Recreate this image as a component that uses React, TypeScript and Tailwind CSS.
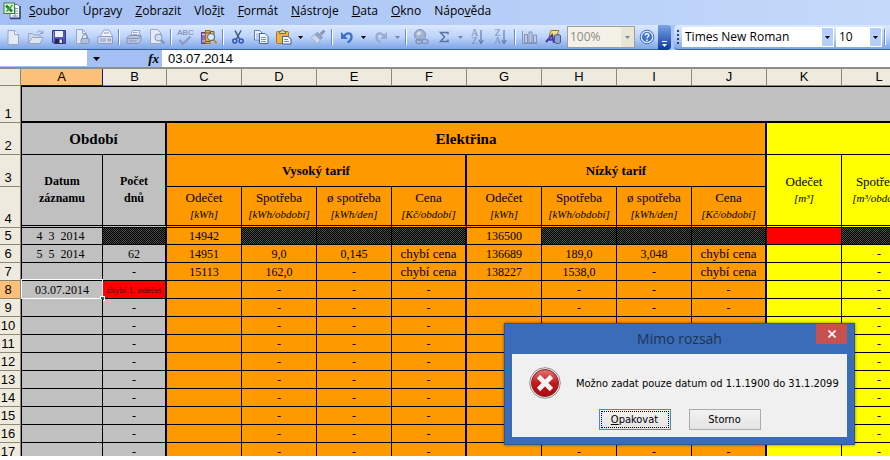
import type { ReactNode } from 'react'

interface MenuEntry {
  before: string
  key: string
  after: string
}

interface SheetRow {
  n: number
  date: string
  days: string
  high: string[]
  low: string[]
  gas: string[]
}

const menu: MenuEntry[] = [
  { before: '', key: 'S', after: 'oubor' },
  { before: 'Úpr', key: 'a', after: 'vy' },
  { before: '', key: 'Z', after: 'obrazit' },
  { before: 'Vlož', key: 'i', after: 't' },
  { before: '', key: 'F', after: 'ormát' },
  { before: '', key: 'N', after: 'ástroje' },
  { before: '', key: 'D', after: 'ata' },
  { before: '', key: 'O', after: 'kno' },
  { before: 'Nápo', key: 'v', after: 'ěda' },
]

const columns = ['A', 'B', 'C', 'D', 'E', 'F', 'G', 'H', 'I', 'J', 'K', 'L']

const emptyTariff = ['', '-', '-', '-']

const rows: SheetRow[] = [
  { n: 6, date: '5  5  2014 ', days: '62', high: ['14951', '9,0', '0,145', 'chybí cena'], low: ['136689', '189,0', '3,048', 'chybí cena'], gas: ['', '-'] },
  { n: 7, date: '', days: '-', high: ['15113', '162,0', '-', 'chybí cena'], low: ['138227', '1538,0', '-', 'chybí cena'], gas: ['', '-'] },
  { n: 8, date: '03.07.2014', days: 'chybí 1. odečet', high: emptyTariff, low: emptyTariff, gas: ['', '-'] },
  ...[9, 10, 11, 12, 13, 14, 15, 16, 17].map((n) => ({
    n,
    date: '',
    days: '-',
    high: emptyTariff,
    low: emptyTariff,
    gas: ['', '-'],
  })),
]

const hatch = 'bg-[repeating-conic-gradient(#000_0_25%,#484848_0_50%)] bg-[length:2px_2px]'

function Icon({ children }: { children: ReactNode }) {
  return (
    <svg viewBox="0 0 16 16" className="h-4 w-4" fill="none" aria-hidden="true">
      {children}
    </svg>
  )
}

function ExcelIcon() {
  return (
    <svg viewBox="0 0 18 18" className="h-[18px] w-[18px]" fill="none" aria-hidden="true">
      <path d="M7 2.500h7.500l2.500 2.500v11H7z" fill="#fff" stroke="#5a6fa8" />
      <path d="M9 6.500h6M9 9h6M9 11.500h6M9 14h6M12 5v10" stroke="#7c93c8" />
      <path d="M17 4v12.500H7" stroke="#31436f" strokeWidth="1.400" />
      <rect x="1" y="1" width="10.500" height="10.500" fill="#e3f2de" stroke="#3d7f3a" />
      <path d="M3 3.500 9 9.500" stroke="#1f8a2b" strokeWidth="2.600" />
      <path d="M9.500 3 3.500 9.500" stroke="#3aa545" strokeWidth="1.600" />
    </svg>
  )
}

function NewIcon() {
  return (
    <Icon>
      <path d="M3 1.500h6.500l4 4v10H3z" fill="#e3e9f5" stroke="#98a5c4" />
      <path d="M9.500 1.500v4h4" fill="#f6f9ff" stroke="#98a5c4" />
    </Icon>
  )
}

function OpenIcon() {
  return (
    <Icon>
      <path d="M.5 14.500v-10h4l1.500 1.500h6v3" fill="#ccd6ea" stroke="#98a5c4" />
      <path d="M.5 14.500 4 8.500h11l-3 6z" fill="#dde5f4" stroke="#98a5c4" />
      <path d="M9 3.500c1.500-2 4-2 5 .5M14.800 1.500v3h-3" stroke="#8d9bc0" />
    </Icon>
  )
}

function SaveIcon() {
  return (
    <Icon>
      <path d="M1.500 1.500h13v13H3l-1.500-1.500z" fill="#5356b8" stroke="#34378c" />
      <rect x="4" y="2" width="8" height="6" fill="#eef1fb" />
      <rect x="4" y="10" width="8" height="4.500" fill="#24265f" />
      <rect x="8.500" y="10.500" width="2.500" height="3.500" fill="#e4e8f8" />
      <path d="M2.500 2.500v10" stroke="#8d90e0" />
    </Icon>
  )
}

function PermissionIcon() {
  return (
    <Icon>
      <path d="M2.500.5h6l4 4v10h-10z" fill="#e3e9f5" stroke="#98a5c4" />
      <path d="M8.500.5v4h4" stroke="#98a5c4" />
      <path d="M8.500 9.500V8a2.500 2.500 0 0 1 5 0v1.500" stroke="#8694b8" />
      <rect x="7" y="9.500" width="8" height="5" rx="1" fill="#b3c0da" stroke="#8694b8" />
    </Icon>
  )
}

function MailIcon() {
  return (
    <Icon>
      <path d="M3.500 7 7 1h5l3.500 6" fill="#f0f4fc" stroke="#98a5c4" />
      <path d="M1 7.500h14.500v7H1z" fill="#d5ddee" stroke="#8c9abd" />
      <path d="M3 10h6M3 12h6M11 10h2.500v2H11zM7 4h5" stroke="#8c9abd" />
    </Icon>
  )
}

function PrintIcon() {
  return (
    <Icon>
      <path d="M4.500 7 6.500 1.500H14L12.500 7" fill="#f0f4fc" stroke="#98a5c4" />
      <path d="M7 3.500h4.500M6.500 5.500h4.500" stroke="#98a5c4" />
      <path d="M1 8.500 3.500 6.500H15v5l-2.500 3H1z" fill="#b9c5de" stroke="#8592b6" />
      <path d="M1 9.500h11.500L15 7M3 12h7.500" stroke="#8592b6" />
    </Icon>
  )
}

function PreviewIcon() {
  return (
    <Icon>
      <path d="M1.500.5h7l3.500 3.500v10.500H1.500z" fill="#e3e9f5" stroke="#98a5c4" />
      <circle cx="9.500" cy="8.500" r="3.500" fill="#d0e0f6" stroke="#8592b6" />
      <path d="m12 11 3.500 3.500" stroke="#8592b6" strokeWidth="2" />
    </Icon>
  )
}

// the letters above the spelling tick are real text inside the button
function SpellIcon() {
  return (
    <span className="flex flex-col items-center">
      <span className="font-['Liberation_Sans'] text-[8px] leading-[7px] text-[#6f80ac]">ABC</span>
      <svg viewBox="0 0 14 9" className="h-[9px] w-[14px]" fill="none" aria-hidden="true">
        <path d="m1.500 4 3.500 4 7.500-7.500" stroke="#8b9bc3" strokeWidth="2.200" />
      </svg>
    </span>
  )
}

function ResearchIcon() {
  return (
    <Icon>
      <rect x=".5" y="3.500" width="4" height="11" fill="#8c6bc9" stroke="#59409a" />
      <path d="M1 5.500h3M1 12h3" stroke="#d9c9f4" />
      <rect x="4.500" y="1.500" width="4.500" height="13" fill="#e8b53c" stroke="#9b6f1c" />
      <path d="M5 4h4M5 12.500h4" stroke="#7d5514" />
      <path d="M9.500 2.500h3.500v9H9.500z" fill="#e2c27a" stroke="#7a5a34" />
      <circle cx="10" cy="8" r="3.500" fill="#d5eefb" stroke="#50658e" />
      <path d="m12.500 10.500 3 4" stroke="#c48a20" strokeWidth="2" />
    </Icon>
  )
}

function CutIcon() {
  return (
    <Icon>
      <path d="M5 1.500 9.500 10M11 1.500 6.500 10" stroke="#44557e" strokeWidth="1.500" />
      <circle cx="4.800" cy="12" r="2" stroke="#2c56b4" strokeWidth="1.500" />
      <circle cx="11.200" cy="12" r="2" stroke="#2c56b4" strokeWidth="1.500" />
    </Icon>
  )
}

function CopyIcon() {
  return (
    <Icon>
      <path d="M1.500 1.500h5l3 3v6.500h-8z" fill="#f4f8ff" stroke="#5d7dbf" />
      <path d="M3 5h4M3 7h4M3 9h3" stroke="#86a2d8" />
      <path d="M6.500 4.500h5.500l3 3v7H6.500z" fill="#f4f8ff" stroke="#4264ad" />
      <path d="M8 8.500h5M8 10.500h5M8 12.500h5" stroke="#6d8ed0" />
    </Icon>
  )
}

function PasteIcon() {
  return (
    <Icon>
      <rect x=".5" y="2.500" width="12" height="12" rx="1" fill="#eab34a" stroke="#a9742a" />
      <path d="M3.500 4.500v-2H5a1.500 1.500 0 0 1 3 0h1.500v2z" fill="#d9d3bd" stroke="#7c6a44" />
      <path d="M6.500 7.500h5.500l3 2.500v5H6.500z" fill="#f4f8ff" stroke="#4c5f8e" />
      <path d="M8 10.500h4M8 12.500h5" stroke="#6d86bd" />
    </Icon>
  )
}

function BrushIcon() {
  return (
    <Icon>
      <path d="m14.500 1.500-4 4" stroke="#8795b8" strokeWidth="3" />
      <path d="m7.500 3.500 5 5-2.500 2-5-5z" fill="#98a7c8" stroke="#8795b8" />
      <path d="m4.500 5.500 6 5.500L7.500 15 1 8.500z" fill="#cfd8ea" stroke="#9eacc9" />
    </Icon>
  )
}

function UndoIcon({ disabled = false }: { disabled?: boolean }) {
  return (
    <svg viewBox="0 0 16 16" className={disabled ? 'h-4 w-4 -scale-x-100' : 'h-4 w-4'} fill="none" aria-hidden="true">
      <path d="M5 7.500C7 3.500 12.500 3 12.500 8c0 3-2 4.500-4 5.500" stroke={disabled ? '#9aabd0' : '#3f6fd0'} strokeWidth="2.400" />
      <path d="M2 3v7h7z" fill={disabled ? '#9aabd0' : '#3f6fd0'} />
    </svg>
  )
}

function LinkIcon() {
  return (
    <Icon>
      <circle cx="7" cy="6" r="5.500" fill="#a4b3d2" stroke="#8091b8" />
      <path d="M4 4c1-2 3-2 4-1S7 6 5 6.500 4 5 4 4" fill="#d2dcee" />
      <rect x="3" y="10.500" width="6" height="4" rx="2" stroke="#8595ba" strokeWidth="1.500" />
      <rect x="9" y="10.500" width="6" height="4" rx="2" stroke="#8595ba" strokeWidth="1.500" />
    </Icon>
  )
}

function SumIcon() {
  return (
    <Icon>
      <path d="M12 5.500V3.500H4.500L8.500 8l-4 4.500H12v-2" stroke="#5b70a4" strokeWidth="1.500" />
    </Icon>
  )
}

function SortIcon({ top, bottom }: { top: string; bottom: string }) {
  return (
    <span className="flex items-center">
      <span className="flex flex-col font-['Liberation_Serif'] text-[10px] leading-[8px] text-[#7f8fb8]">
        <span>{top}</span>
        <span>{bottom}</span>
      </span>
      <svg viewBox="0 0 6 16" className="h-4 w-[6px]" fill="none" aria-hidden="true">
        <path d="M3 1v13M.8 11 3 14.500 5.200 11" stroke="#647cb4" strokeWidth="1.200" />
      </svg>
    </span>
  )
}

function ChartIcon() {
  return (
    <Icon>
      <path d="M.5 2v12.500h15" stroke="#8393b8" />
      <path d="M2.500 5.500h3v8h-3zM7 3h3v10.500H7zM11.500 6h3v7.500h-3z" fill="#c0cbe2" stroke="#8393b8" />
    </Icon>
  )
}

function DrawingIcon() {
  return (
    <Icon>
      <path d="M6 1.500h8l-2.500 5.500H4z" fill="#f3dd80" stroke="#9a7b26" />
      <path d="M9.500 7a3 1.500 0 0 1 6 0v5a3 2 0 0 1-6 1z" fill="#8fa4cd" stroke="#45598c" />
      <path d="M1 13 7 6l2 8M3.500 10.800h5" stroke="#4e3ca6" strokeWidth="2" />
    </Icon>
  )
}

function HelpIcon() {
  return (
    <Icon>
      <circle cx="8" cy="8" r="6.800" fill="#dbe9fd" stroke="#3f6cc0" />
      <circle cx="8" cy="8" r="5" fill="#3d70d0" />
      <path d="M6.200 6.500c0-2.500 3.800-2.300 3.600 0C9.700 7.800 8 7.800 8 9.300M8 10.500v1.500" stroke="#fff" strokeWidth="1.500" />
    </Icon>
  )
}

function ErrorIcon() {
  return (
    <svg viewBox="0 0 32 32" className="h-8 w-8" fill="none" aria-hidden="true">
      <defs>
        <linearGradient id="errorFill" x1="0" y1="0" x2="0" y2="1">
          <stop offset="0" stopColor="#e0777a" />
          <stop offset=".5" stopColor="#c6191f" />
          <stop offset="1" stopColor="#a90a10" />
        </linearGradient>
      </defs>
      <circle cx="16" cy="16" r="15.300" fill="#f4f4f4" stroke="#8d8d8d" />
      <circle cx="16" cy="16" r="13.500" fill="url(#errorFill)" stroke="#8e2023" />
      <path d="m9.500 9.500 13 13M22.500 9.500l-13 13" stroke="#f4f4f4" strokeWidth="4.600" />
    </svg>
  )
}

function Arrow({ disabled = false }: { disabled?: boolean }) {
  return (
    <svg viewBox="0 0 5 3" className="h-[3px] w-[5px]" aria-hidden="true">
      <path d="M0 0h5L2.500 3z" fill={disabled ? '#7787aa' : '#000'} />
    </svg>
  )
}

function ToolButton({ label, children }: { label: string; children: ReactNode }) {
  return (
    <button type="button" aria-label={label} className="flex h-6 w-[23px] shrink-0 items-center justify-center">
      {children}
    </button>
  )
}

function DropButton({ label, disabled = false }: { label: string; disabled?: boolean }) {
  return (
    <button type="button" aria-label={label} className="flex h-6 w-[11px] shrink-0 items-center justify-center">
      <Arrow disabled={disabled} />
    </button>
  )
}

function Separator() {
  return (
    <span className="flex h-4 w-[6px] shrink-0 justify-center">
      <span className="w-px bg-[#6a8ccb]" />
      <span className="w-px bg-white" />
    </span>
  )
}

function Toolbar() {
  return (
    <div className="flex h-[25px] shrink-0 bg-[#a9c4f5]">
      <div className="flex shrink-0 items-center border-b border-[#3b619c] bg-linear-to-b from-[#dbe9fe] via-[#bcd3fa] to-[#7fa5e6] pl-px">
        <ToolButton label="Nový"><NewIcon /></ToolButton>
        <ToolButton label="Otevřít"><OpenIcon /></ToolButton>
        <ToolButton label="Uložit"><SaveIcon /></ToolButton>
        <ToolButton label="Oprávnění"><PermissionIcon /></ToolButton>
        <ToolButton label="E-mail"><MailIcon /></ToolButton>
        <Separator />
        <ToolButton label="Tisk"><PrintIcon /></ToolButton>
        <ToolButton label="Náhled"><PreviewIcon /></ToolButton>
        <Separator />
        <ToolButton label="Pravopis"><SpellIcon /></ToolButton>
        <ToolButton label="Zdroje informací"><ResearchIcon /></ToolButton>
        <Separator />
        <ToolButton label="Vyjmout"><CutIcon /></ToolButton>
        <ToolButton label="Kopírovat"><CopyIcon /></ToolButton>
        <ToolButton label="Vložit"><PasteIcon /></ToolButton>
        <DropButton label="Možnosti vložení" />
        <ToolButton label="Kopírovat formát"><BrushIcon /></ToolButton>
        <Separator />
        <ToolButton label="Zpět"><UndoIcon /></ToolButton>
        <DropButton label="Historie zpět" />
        <ToolButton label="Znovu"><UndoIcon disabled /></ToolButton>
        <DropButton label="Historie znovu" disabled />
        <Separator />
        <ToolButton label="Hypertextový odkaz"><LinkIcon /></ToolButton>
        <ToolButton label="Automatický součet"><SumIcon /></ToolButton>
        <DropButton label="Další funkce" disabled />
        <ToolButton label="Seřadit vzestupně"><SortIcon top="A" bottom="Z" /></ToolButton>
        <ToolButton label="Seřadit sestupně"><SortIcon top="Z" bottom="A" /></ToolButton>
        <Separator />
        <ToolButton label="Průvodce grafem"><ChartIcon /></ToolButton>
        <ToolButton label="Kreslení"><DrawingIcon /></ToolButton>
        <div className="ml-[3px] flex h-[22px] w-[68px] items-center border border-[#a09f95] bg-[#f3f1e8]">
          <select aria-label="Lupa" disabled className="h-full min-w-0 flex-1 appearance-none pl-[2px] text-[12px] text-[#8c8c84] opacity-100">
            <option>100%</option>
          </select>
          <span className="flex h-full w-[13px] items-center justify-center bg-[#e9e6d5]"><Arrow disabled /></span>
        </div>
        <ToolButton label="Nápověda"><HelpIcon /></ToolButton>
      </div>
      <button type="button" aria-label="Možnosti panelu" className="flex w-[13px] shrink-0 flex-col items-center justify-end gap-[2px] rounded-r-sm bg-linear-to-b from-[#7ba2e7] to-[#0a3a9a] pb-[3px]">
        <span className="h-px w-[5px] bg-white" />
        <svg viewBox="0 0 5 3" className="h-[3px] w-[5px]" aria-hidden="true">
          <path d="M0 0h5L2.500 3z" fill="#fff" />
        </svg>
      </button>
      <div className="ml-[3px] flex min-w-0 flex-1 items-center overflow-hidden rounded-l-sm border-b border-[#3b619c] bg-linear-to-b from-[#dbe9fe] via-[#bcd3fa] to-[#7fa5e6] pl-[3px]">
        <span className="mr-[3px] flex w-[2px] shrink-0 flex-col gap-[2px]">
          <span className="h-[2px] bg-[#27417f]" />
          <span className="h-[2px] bg-[#27417f]" />
          <span className="h-[2px] bg-[#27417f]" />
          <span className="h-[2px] bg-[#27417f]" />
        </span>
        <div className="flex h-5 w-[152px] shrink-0 items-center bg-white pr-px">
          <select aria-label="Písmo" className="h-full min-w-0 flex-1 appearance-none pl-[3px] text-[12px] text-black">
            <option>Times New Roman</option>
          </select>
          <span className="flex h-[18px] w-[11px] items-center justify-center bg-[#b7cff8]"><Arrow /></span>
        </div>
        <div className="ml-[2px] flex h-5 w-[46px] shrink-0 items-center bg-white pr-px">
          <select aria-label="Velikost písma" className="h-full min-w-0 flex-1 appearance-none pl-[3px] text-[12px] text-black">
            <option>10</option>
          </select>
          <span className="flex h-[18px] w-[11px] items-center justify-center bg-[#b7cff8]"><Arrow /></span>
        </div>
        <Separator />
      </div>
    </div>
  )
}

function FormulaBar() {
  return (
    <div className="flex h-[19px] shrink-0 items-stretch border-b-2 border-[#8e8e88] bg-[#a3bff3]">
      <input aria-label="Pole názvů" className="h-4 w-[87px] shrink-0 bg-white" />
      <button type="button" aria-label="Seznam názvů" className="flex w-[19px] shrink-0 items-center justify-center">
        <svg viewBox="0 0 7 4" className="h-1 w-[7px]" aria-hidden="true">
          <path d="M0 0h7L3.500 4z" fill="#000" />
        </svg>
      </button>
      <button
        type="button"
        aria-label="Vložit funkci"
        className="w-14 shrink-0 pr-[3px] text-right font-['Liberation_Serif'] text-[13px] leading-[16px] font-bold italic"
      >
        fx
      </button>
      <input
        aria-label="Řádek vzorců"
        defaultValue="03.07.2014"
        className="min-w-0 flex-1 bg-white pl-[6px] font-['Liberation_Sans'] text-[13px] leading-[16px] text-black"
      />
    </div>
  )
}

function RowNumber({ n, selected = false }: { n: number; selected?: boolean }) {
  return (
    <th
      scope="row"
      className={`border-r border-b border-[#8b8975] pr-1 text-center align-bottom font-['Liberation_Sans'] text-[13px] leading-[16px] font-normal ${selected ? 'bg-[#fdc078]' : 'bg-[#eeebde]'}`}
    >
      {n}
    </th>
  )
}

function UnitHead({ title, unit, last = false, rowSpan = 1, color }: { title: string; unit: string; last?: boolean; rowSpan?: number; color: string }) {
  return (
    <th
      rowSpan={rowSpan}
      className={`border-b-[3px] border-black text-[13px] leading-[16px] font-normal [border-bottom-style:double] ${last ? 'border-r-2' : 'border-r'} ${color}`}
    >
      <div>{title}</div>
      <div className="text-[11px] italic">{unit}</div>
    </th>
  )
}

function TariffHeads() {
  return (
    <>
      <UnitHead title="Odečet" unit="[kWh]" color="bg-[#ff9900]" />
      <UnitHead title="Spotřeba" unit="[kWh/období]" color="bg-[#ff9900]" />
      <UnitHead title="ø spotřeba" unit="[kWh/den]" color="bg-[#ff9900]" />
      <UnitHead title="Cena" unit="[Kč/období]" last color="bg-[#ff9900]" />
    </>
  )
}

function TariffCells({ values }: { values: string[] }) {
  return (
    <>
      {values.map((value, i) => (
        <td
          key={i}
          className={`border-b border-black bg-[#ff9900] text-center whitespace-nowrap ${i === 3 ? 'border-r-2' : 'border-r'} ${value.startsWith('chybí') ? 'text-[13px]' : 'text-[12px]'}`}
        >
          {value}
        </td>
      ))}
    </>
  )
}

function HatchedCells() {
  return (
    <>
      <td className={`border-r border-b border-black ${hatch}`} />
      <td className={`border-r border-b border-black ${hatch}`} />
      <td className={`border-r-2 border-b border-black ${hatch}`} />
    </>
  )
}

function Sheet() {
  return (
    <div className="min-h-0 flex-1 overflow-hidden">
      <table className="w-[917px] table-fixed border-separate border-spacing-0 font-['Liberation_Serif'] leading-[16px] text-black">
        <colgroup>
          <col className="w-[21px]" />
          <col className="w-[82px]" />
          <col className="w-[64px]" />
          {columns.slice(2).map((name) => (
            <col key={name} className="w-[75px]" />
          ))}
        </colgroup>
        <thead>
          <tr className="h-[17px]">
            <th className="border-r border-b border-[#8b8975] bg-[#eeebde]" />
            {columns.map((name) => (
              <th
                key={name}
                scope="col"
                className={`border-r border-b font-['Liberation_Sans'] text-[13px] font-normal ${name === 'A' ? 'border-[#16166e] bg-[#fdc078]' : 'border-[#8b8975] bg-[#eeebde]'}`}
              >
                {name}
              </th>
            ))}
          </tr>
        </thead>
        <tbody>
          <tr className="h-[37px]">
            <RowNumber n={1} />
            <td colSpan={12} className="border-t border-b-2 border-l border-black bg-[#c0c0c0]" />
          </tr>
          <tr className="h-8 text-[15px]">
            <RowNumber n={2} />
            <th colSpan={2} className="border-r-2 border-b border-l border-black bg-[#c0c0c0]">Období</th>
            <th colSpan={8} className="border-r-2 border-b border-black bg-[#ff9900]">Elektřina</th>
            <th colSpan={2} className="border-r border-b border-black bg-[#ffff00]" />
          </tr>
          <tr className="h-8 text-[13px]">
            <RowNumber n={3} />
            <th rowSpan={2} className="border-r border-b-[3px] border-l border-black bg-[#c0c0c0] text-[12px] leading-[17px] [border-bottom-style:double]">
              Datum<br />záznamu
            </th>
            <th rowSpan={2} className="border-r-2 border-b-[3px] border-black bg-[#c0c0c0] text-[12px] leading-[17px] [border-bottom-style:double]">
              Počet<br />dnů
            </th>
            <th colSpan={4} className="border-r-2 border-b border-black bg-[#ff9900]">Vysoký tarif</th>
            <th colSpan={4} className="border-r-2 border-b border-black bg-[#ff9900]">Nízký tarif</th>
            <UnitHead title="Odečet" unit="[m³]" rowSpan={2} color="bg-[#ffff00]" />
            <UnitHead title="Spotřeba" unit="[m³/období]" rowSpan={2} color="bg-[#ffff00]" />
          </tr>
          <tr className="h-[41px]">
            <RowNumber n={4} />
            <TariffHeads />
            <TariffHeads />
          </tr>
          <tr className="h-[17px] text-center text-[12px]">
            <RowNumber n={5} />
            <td className="border-r border-b border-l border-black bg-[#c0c0c0] whitespace-pre">{'4  3  2014 '}</td>
            <td className={`border-r-2 border-b border-black ${hatch}`} />
            <td className="border-r border-b border-black bg-[#ff9900]">14942</td>
            <HatchedCells />
            <td className="border-r border-b border-black bg-[#ff9900]">136500</td>
            <HatchedCells />
            <td className="border-r border-b border-black bg-[#ff0000]" />
            <td className={`border-r border-b border-black ${hatch}`} />
          </tr>
          {rows.map((row) => (
            <tr key={row.n} className="h-[18px] text-center text-[12px]">
              <RowNumber n={row.n} selected={row.n === 8} />
              <td className="relative border-r border-b border-l border-black bg-[#c0c0c0] whitespace-pre">
                {row.date}
                {row.n === 8 && (
                  <span className="absolute -inset-px -top-[2px] border border-white">
                    <span className="absolute -right-[3px] -bottom-[3px] h-[5px] w-[5px] border border-white bg-[#3f5f5f]" />
                  </span>
                )}
              </td>
              <td
                className={`border-r-2 border-b border-black whitespace-nowrap ${row.n === 8 ? 'bg-[#ff0000] text-[9px] text-[#3a0000]' : 'bg-[#c0c0c0]'}`}
              >
                {row.days}
              </td>
              <TariffCells values={row.high} />
              <TariffCells values={row.low} />
              {row.gas.map((value, i) => (
                <td key={i} className="border-r border-b border-black bg-[#ffff00]">{value}</td>
              ))}
            </tr>
          ))}
        </tbody>
      </table>
    </div>
  )
}

function RangeDialog() {
  return (
    <div
      role="alertdialog"
      aria-labelledby="dialog-title"
      aria-describedby="dialog-text"
      className="absolute top-[323px] left-[504px] w-[351px] border border-[#34568c] bg-[#3a6cb8] px-[7px] pb-[7px] text-black shadow-[0_0_3px_rgba(0,0,0,0.5)]"
    >
      <div className="grid h-[30px] grid-cols-[1fr_auto_1fr]">
        <h2 id="dialog-title" className="col-start-2 text-[14px] leading-[30px] text-[#1d3455]">Mimo rozsah</h2>
        <button type="button" aria-label="Zavřít" className="flex h-5 w-[31px] items-center justify-center justify-self-end bg-[#c75050]">
          <svg viewBox="0 0 8 8" className="h-2 w-2" fill="none" aria-hidden="true">
            <path d="m.5.5 7 7M7.500.5l-7 7" stroke="#fff" strokeWidth="1.600" />
          </svg>
        </button>
      </div>
      <div className="flex flex-col gap-[10px] bg-[#f0f0f0] pt-[13px] pb-[7px] font-['DejaVu_Sans_Condensed','DejaVu_Sans',sans-serif] text-[11px]">
        <div className="flex items-center gap-[15px] pl-[17px]">
          <ErrorIcon />
          <p id="dialog-text" className="pt-[2px] leading-[14px] whitespace-nowrap">
            Možno zadat pouze datum od 1.1.1900 do 31.1.2099
          </p>
        </div>
        <div className="flex justify-center gap-[18px] leading-[15px]">
          <button type="button" className="h-[21px] w-[72px] border border-[#3c8ad8] bg-linear-to-b from-[#f2f2f2] to-[#e4e4e4] p-px">
            <span className="block border border-dotted border-black">
              <u>O</u>pakovat
            </span>
          </button>
          <button type="button" className="h-[21px] w-[72px] border border-[#acacac] bg-linear-to-b from-[#f2f2f2] to-[#e4e4e4]">Storno</button>
        </div>
      </div>
    </div>
  )
}

export default function App() {
  return (
    <div className="relative flex h-screen flex-col overflow-hidden bg-white pb-1 font-['Open_Sans',sans-serif]">
      <nav aria-label="Hlavní nabídka" className="flex h-[25px] shrink-0 items-center bg-linear-to-r from-[#a3bff3] to-[#c5dafa] pb-[3px] pl-[3px]">
        <ExcelIcon />
        <ul className="flex gap-[13px] pl-2 text-[12px] leading-[16px] text-black">
          {menu.map((item) => (
            <li key={item.before + item.key + item.after}>
              <button type="button">
                {item.before}
                <u>{item.key}</u>
                {item.after}
              </button>
            </li>
          ))}
        </ul>
      </nav>
      <Toolbar />
      <FormulaBar />
      <Sheet />
      <RangeDialog />
    </div>
  )
}
